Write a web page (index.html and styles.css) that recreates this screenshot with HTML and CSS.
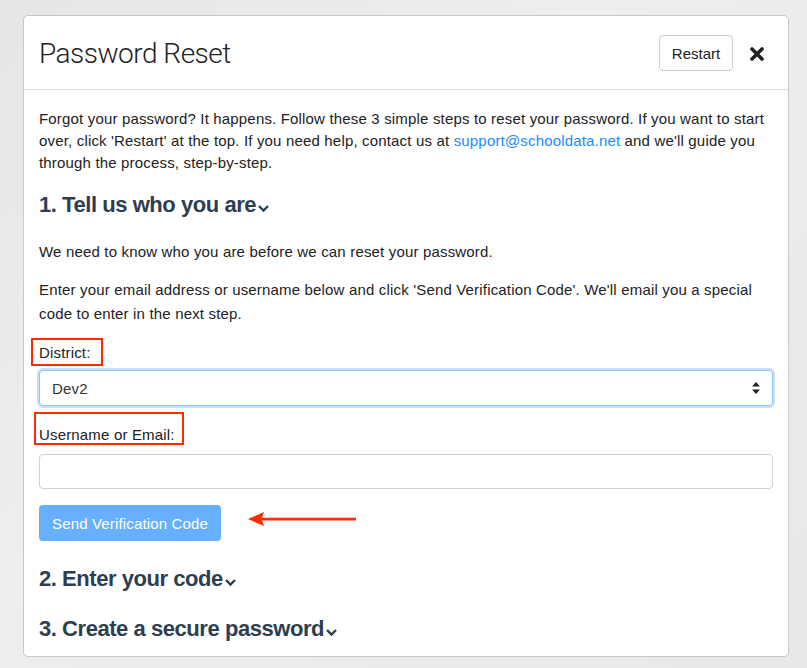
FILE: index.html
```html
<!DOCTYPE html>
<html>
<head>
<meta charset="utf-8">
<link rel="stylesheet" href="styles.css">
</head>
<body>
<div class="modal">
  <div class="modal-header">
    <h1 class="title">Password Reset</h1>
    <div class="header-actions">
      <button class="btn-restart">Restart</button>
      <svg class="close" width="16" height="16" viewBox="0 0 16 16"><path d="M3 3 L13 13 M13 3 L3 13" stroke="#222" stroke-width="3.6" stroke-linecap="round"/></svg>
    </div>
  </div>
  <div class="modal-body">
    <p class="intro">Forgot your password? It happens. Follow these 3 simple steps to reset your password. If you want to start over, click 'Restart' at the top. If you need help, contact us at <a href="#">support@schooldata.net</a> and we'll guide you through the process, step-by-step.</p>
    <h2 class="step">1. Tell us who you are<svg class="chev" width="13" height="10" viewBox="0 0 13 10"><path d="M2 3 L6.5 7.5 L11 3" fill="none" stroke="#2c3e50" stroke-width="2.4"/></svg></h2>
    <p class="text first">We need to know who you are before we can reset your password.</p>
    <p class="text">Enter your email address or username below and click 'Send Verification Code'. We'll email you a special code to enter in the next step.</p>
    <div class="group">
      <label class="lbl district">District:</label>
      <div class="select">
        <span>Dev2</span>
        <svg width="10" height="14" viewBox="0 0 10 14"><path d="M5 1 L9 5.5 H1 Z M5 13 L9 8.5 H1 Z" fill="#222"/></svg>
      </div>
    </div>
    <div class="group">
      <label class="lbl user">Username or Email:</label>
      <div class="input"></div>
    </div>
    <div class="action">
      <button class="btn-send">Send Verification Code</button>
      <svg class="arrow" width="110" height="16" viewBox="0 0 110 16"><path d="M0 8 L16 1 L14 6.8 L108 6.8 L108 9.4 L14 9.4 L16 15 Z" fill="#ff2a00"/></svg>
    </div>
    <h2 class="step s2">2. Enter your code<svg class="chev" width="13" height="10" viewBox="0 0 13 10"><path d="M2 3 L6.5 7.5 L11 3" fill="none" stroke="#2c3e50" stroke-width="2.4"/></svg></h2>
    <h2 class="step s3">3. Create a secure password<svg class="chev" width="13" height="10" viewBox="0 0 13 10"><path d="M2 3 L6.5 7.5 L11 3" fill="none" stroke="#2c3e50" stroke-width="2.4"/></svg></h2>
  </div>
</div>
</body>
</html>
```
FILE: styles.css
```css
html, body {
  margin: 0;
  padding: 0;
  height: 668px;
  overflow: hidden;
}
body {
  background: linear-gradient(135deg, #e4e6e8 0%, #eceef0 40%, #e6e8ea 100%);
  font-family: "Liberation Sans", Arial, sans-serif;
  color: #222;
  padding: 15px 19px 0 23px;
  box-sizing: border-box;
}
.modal {
  width: 766px;
  height: 642px;
  box-sizing: border-box;
  background: #fff;
  border: 1px solid #c8c8c8;
  border-radius: 5px;
  overflow: hidden;
}
.modal-header {
  height: 74px;
  box-sizing: border-box;
  border-bottom: 1px solid #dcdcdc;
  display: flex;
  align-items: center;
  justify-content: space-between;
  padding: 0 23px 0 15px;
}
.title {
  margin: 0;
  font-family: "Roboto", "Liberation Sans", sans-serif;
  font-weight: 300;
  font-size: 28px;
  letter-spacing: -0.5px;
  color: #222;
  padding-top: 2px;
}
.header-actions {
  display: flex;
  align-items: center;
  gap: 16px;
}
.btn-restart {
  width: 74px;
  height: 36px;
  background: #fff;
  border: 1px solid #ccc;
  border-radius: 4px;
  font-family: "Liberation Sans", Arial, sans-serif;
  font-size: 15px;
  color: #222;
  padding: 0;
  margin-top: 1px;
}
.close { display: block; margin-top: 2px; }
.modal-body {
  padding: 18px 15px 0 15px;
  letter-spacing: 0.17px;
}
.intro {
  margin: 0;
  font-size: 15px;
  line-height: 22px;
}
.intro a { color: #1a8cff; text-decoration: none; }
.step {
  margin: 18px 0 0;
  font-size: 22px;
  line-height: 26px;
  font-weight: bold;
  color: #2c3e50;
  letter-spacing: -0.45px;
  display: flex;
  align-items: center;
}
.chev { margin-left: 1px; margin-top: 6px; }
.text {
  margin: 0 0 15px;
  font-size: 15px;
  line-height: 23px;
}
.text.first { margin-top: 22px; }
.text + .text { line-height: 24px; }
.lbl {
  display: block;
  font-size: 15px;
  line-height: 20px;
  position: relative;
  width: max-content;
}
.lbl::after {
  content: "";
  position: absolute;
  border: 2.5px solid #ff2a00;
}
.district { margin-top: 17px; }
.district::after { left: -8px; top: -5px; width: 68px; height: 24px; }
.user { margin-top: 19px; }
.user::after { left: -5px; top: -13px; width: 146px; height: 29px; }
.select {
  margin-top: 7px;
  height: 36px;
  box-sizing: border-box;
  border: 1px solid #8fc1fb;
  box-shadow: 0 0 0 2px #c4defc;
  border-radius: 4px;
  display: flex;
  align-items: center;
  justify-content: space-between;
  padding: 0 11px 0 12px;
  font-size: 15px;
  color: #333;
}
.input {
  margin-top: 9px;
  height: 35px;
  box-sizing: border-box;
  border: 1px solid #d0d0d0;
  border-radius: 4px;
}
.action {
  margin-top: 16px;
  display: flex;
  align-items: center;
  gap: 27px;
}
.btn-send {
  width: 182px;
  height: 36px;
  border: none;
  border-radius: 4px;
  background: #66b0ff;
  color: #fff;
  font-family: "Liberation Sans", Arial, sans-serif;
  font-size: 15px;
  letter-spacing: 0.15px;
  padding: 0;
}
.arrow { display: block; margin-top: -8px; }
.s2 { margin-top: 25px; }
.s3 { margin-top: 24px; }
```
